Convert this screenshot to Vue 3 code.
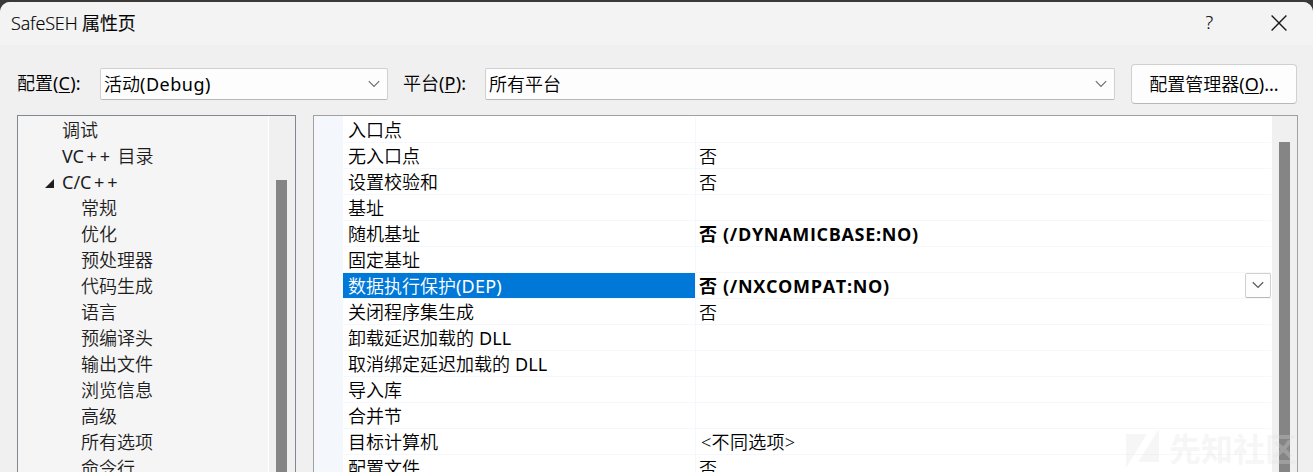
<script setup>
const tree = [
  { text: '调试', level: 0 },
  { pre: 'VC', plus: '++', text: ' 目录', level: 0 },
  { pre: 'C/C', plus: '++', text: '', level: 0, open: true },
  { text: '常规', level: 1 },
  { text: '优化', level: 1 },
  { text: '预处理器', level: 1 },
  { text: '代码生成', level: 1 },
  { text: '语言', level: 1 },
  { text: '预编译头', level: 1 },
  { text: '输出文件', level: 1 },
  { text: '浏览信息', level: 1 },
  { text: '高级', level: 1 },
  { text: '所有选项', level: 1 },
  { text: '命令行', level: 1 },
]
const rows = [
  { name: '入口点', value: '' },
  { name: '无入口点', value: '否' },
  { name: '设置校验和', value: '否' },
  { name: '基址', value: '' },
  { name: '随机基址', value: '否 (/DYNAMICBASE:NO)', bold: true },
  { name: '固定基址', value: '' },
  { name: '数据执行保护', latin: '(DEP)', value: '否 (/NXCOMPAT:NO)', bold: true, selected: true },
  { name: '关闭程序集生成', value: '否' },
  { name: '卸载延迟加载的', latin: ' DLL', value: '' },
  { name: '取消绑定延迟加载的', latin: ' DLL', value: '' },
  { name: '导入库', value: '' },
  { name: '合并节', value: '' },
  { name: '目标计算机', value: '<不同选项>', mixed: true },
  { name: '配置文件', value: '否' },
]
</script>

<template>
  <div class="screen">
    <div class="window">
      <header class="titlebar">
        <span class="title">SafeSEH 属性页</span>
        <span class="help">?</span>
        <svg class="close" width="16" height="16" viewBox="0 0 16 16"><path d="M.6.6l14.8 14.8M15.4.6L.6 15.4" fill="none" stroke="#1a1a1a" stroke-width="1.4" /></svg>
      </header>
      <div class="toolbar">
        <label class="label config">配置<span class="latin">(<u>C</u>):</span></label>
        <div class="combo combo-config">
          <span>活动<span class="latin debug">(Debug)</span></span>
          <svg class="chev" width="12" height="8" viewBox="0 0 12 8"><path d="M.8 1.200L6 6.400l5.200-5.200" fill="none" stroke="#6a6a6a" stroke-width="1.1" /></svg>
        </div>
        <label class="label platform">平台<span class="latin">(<u>P</u>):</span></label>
        <div class="combo combo-platform">
          <span>所有平台</span>
          <svg class="chev" width="12" height="8" viewBox="0 0 12 8"><path d="M.8 1.200L6 6.400l5.200-5.200" fill="none" stroke="#6a6a6a" stroke-width="1.1" /></svg>
        </div>
        <button class="manager"><span>配置管理器<span class="latin ellipsis">(<u>O</u>)...</span></span></button>
      </div>
      <main class="panels">
        <nav class="tree">
          <div class="tree-list">
            <div v-for="(t, i) in tree" :key="i" class="node" :class="{ child: t.level }">
              <svg v-if="t.open" class="arrow" width="9" height="9" viewBox="0 0 9 9"><path d="M9 0v9H0z" fill="#1e1e1e" /></svg>
              <span><span v-if="t.plus" class="latin code">{{ t.pre }}<span class="plus">{{ t.plus }}</span></span>{{ t.text }}</span>
            </div>
          </div>
          <div class="scroll tree-scroll"><div class="thumb"></div></div>
        </nav>
        <section class="grid">
          <div class="gutter"></div>
          <div class="rows">
            <div v-for="r in rows" :key="r.name" class="row" :class="{ selected: r.selected }">
              <div class="name">{{ r.name }}<span v-if="r.latin" class="latin">{{ r.latin }}</span></div>
              <div class="value" :class="{ bold: r.bold, mixed: r.mixed }"><span>{{ r.value }}</span></div>
              <div v-if="r.selected" class="drop">
                <svg width="12" height="8" viewBox="0 0 12 8"><path d="M.8 1.200L6 6.400l5.200-5.200" fill="none" stroke="#5c5c5c" stroke-width="1.300" /></svg>
              </div>
            </div>
          </div>
          <div class="scroll grid-scroll"><div class="thumb"></div></div>
        </section>
      </main>
    </div>
    <div class="watermark">
      <svg width="34" height="40" viewBox="0 0 34 40"><path d="M0 5h21L0 39zM33 0v33H12z" fill="currentColor" /></svg>
      <span>先知社区</span>
    </div>
  </div>
</template>

<style>
body { margin: 0; overflow: hidden; }
</style>

<style scoped>
.screen {
  position: relative; width: 1313px; height: 472px; overflow: hidden;
  box-sizing: border-box; padding-top: 2px; background: #3b3838;
  font: 350 18px/26px "Noto Sans", "Noto Sans CJK SC", sans-serif; color: #000;
  white-space: nowrap;
}
.window { height: 470px; background: #f0f0f0; border-radius: 10px 10px 0 0; overflow: hidden; display: flex; flex-direction: column; }
.titlebar { height: 43px; flex: none; background: #f3f3f3; display: flex; align-items: center; padding: 0 26px 2px 11px; box-sizing: border-box; font-family: "Open Sans", "Noto Sans CJK SC", sans-serif; }
.title { flex: 1; letter-spacing: -.12px; -webkit-text-stroke: .2px #000; }
.help { margin-right: 58px; margin-top: -2px; -webkit-text-stroke: .2px #000; }
.close { display: block; }
.toolbar { height: 70px; flex: none; display: flex; padding: 19px 16px 0 17px; box-sizing: border-box; }
.label { line-height: 39px; }
.config { width: 83px; }
.platform { width: 82px; margin-left: 15px; }
.latin { font-weight: 400; letter-spacing: .2px; }
.debug { letter-spacing: .5px; }
.ellipsis { letter-spacing: 0; }
u { text-decoration-thickness: 1px; text-underline-offset: 2px; letter-spacing: inherit; }
.combo { height: 32px; margin-top: 4px; box-sizing: border-box; border: 1px solid #d0d0d0; border-bottom-color: #b8b8b8; border-radius: 2px; background: #fdfdfd; display: flex; align-items: center; justify-content: space-between; padding: 0 7px 0 3px; }
.combo-config { width: 288px; }
.combo-platform { width: 630px; }
.manager { margin-left: 16px; width: 166px; height: 40px; box-sizing: border-box; padding: 0; border: 1px solid #d0d0d0; border-bottom-color: #b8b8b8; border-radius: 4px; background: #fdfdfd; font: inherit; color: inherit; }
.panels { flex: 1; min-height: 0; display: flex; padding: 0 15px 0 17px; gap: 17px; }
.tree { width: 279px; box-sizing: border-box; border: 1px solid #828790; border-bottom: 0; background: #f5f5f5; display: flex; overflow: hidden; color: #1e1e1e; }
.tree-list { width: 251px; padding-top: 1px; border-right: 1px solid #fff; box-sizing: border-box; }
.node { height: 26px; padding-left: 44px; display: flex; align-items: center; position: relative; white-space: pre; }
.child { padding-left: 63px; }
.code { letter-spacing: 0; }
.plus { letter-spacing: 2.900px; margin-left: 2.500px; }
.arrow { position: absolute; left: 27px; top: 10px; }
.scroll { background: #f0f0f0; box-sizing: border-box; padding-left: 7px; }
.thumb { width: 11px; height: 100%; background: #858585; }
.tree-scroll { width: 26px; padding-top: 64px; }
.grid { width: 985px; box-sizing: border-box; border: 1px solid #a0a0a0; border-bottom: 0; background: #fff; display: flex; overflow: hidden; }
.gutter { width: 29px; background: #f4f7fc; }
.rows { width: 929px; padding-top: 1px; box-sizing: border-box; }
.row { height: 26px; margin-right: 1px; box-sizing: border-box; border-bottom: 1px solid #f4f7fc; display: flex; position: relative; line-height: 27px; }
.name { width: 352px; height: 25px; box-sizing: border-box; padding-left: 5px; }
.value { flex: 1; height: 25px; border-left: 1px solid #f4f7fc; padding-left: 3px; }
.mixed { padding-left: 5px; letter-spacing: .3px; }
.selected .name { background: #0078d7; color: #fff; }
.bold { font-family: "Open Sans", "Noto Sans CJK SC", sans-serif; font-weight: 700; letter-spacing: .68px; }
.drop { position: absolute; right: 0; top: 0; width: 26px; height: 25px; box-sizing: border-box; border: 1px solid #d0d0d0; border-bottom-color: #b8b8b8; border-radius: 2px; background: #fdfdfd; display: flex; align-items: center; justify-content: center; }
.drop svg { margin: -2px 0 0 -1px; }
.grid-scroll { width: 25px; padding-top: 26px; }
.watermark { position: absolute; left: 1126px; top: 429px; display: flex; align-items: center; color: rgba(225, 225, 225, .3); font: 700 32px/38px "Noto Sans CJK SC", sans-serif; gap: 9px; }
.watermark span { margin-top: -4px; letter-spacing: 0; }
</style>
